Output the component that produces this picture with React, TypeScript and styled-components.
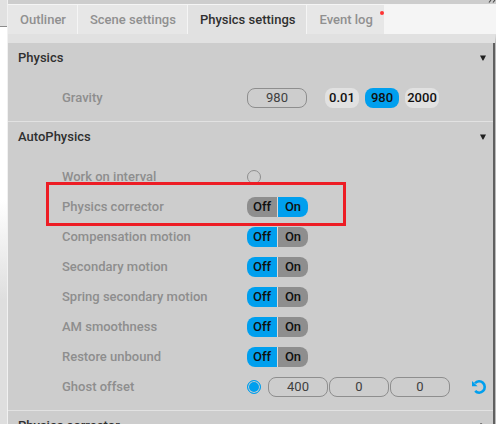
import React, { useState } from "react";
import styled, { createGlobalStyle, css } from "styled-components";

const blue = "#009fee";
const panelGrey = "#cdcdcd";
const line = "#e2e2e2";

const GlobalStyle = createGlobalStyle`
  * { box-sizing: border-box; }
  body {
    margin: 0;
    overflow: hidden;
    background: #ffffff;
    font: 500 13px/20px Roboto, "Liberation Sans", sans-serif;
    color: #303030;
  }
  button, input { font: inherit; }
`;

const Page = styled.div`
  display: flex;
  height: 100vh;
  overflow: hidden;
`;

const Viewport = styled.div`
  flex: 0 0 8px;
  border-right: 1px solid #f1f1f1;
  background: linear-gradient(#ffffff 200px, #dedede 300px);
`;

const ViewportBar = styled.div`
  height: 27px;
  background: #e1e1e1;
  border-bottom: 1px solid #8c8c8c;
`;

const Panel = styled.div`
  flex: 1;
  min-width: 0;
  display: flex;
  flex-direction: column;
`;

const TitleBar = styled.div`
  flex: 0 0 4px;
  display: flex;
  justify-content: flex-end;
  background: ${panelGrey};
`;

const TabBar = styled.div`
  flex: 0 0 30px;
  display: flex;
  gap: 1px;
  padding-top: 1px;
  background: #f5f5f5;
`;

const Tab = styled.button<{ $active?: boolean }>`
  position: relative;
  border: 0;
  padding: 0 11px 0 12px;
  white-space: nowrap;
  background: ${(p) => (p.$active ? "#e1e1e1" : "#e7e7e7")};
  color: ${(p) => (p.$active ? "#303030" : "#909090")};
`;

const Dot = styled.span`
  position: absolute;
  top: 6px;
  right: 0;
  width: 4px;
  height: 4px;
  border-radius: 50%;
  background: #ff3434;
`;

const Content = styled.main`
  flex: 1;
  min-height: 0;
  overflow: hidden;
  border-top: 9px solid #e1e1e1;
  border-right: 1px solid #bababa;
  background: ${panelGrey};
  display: flex;
`;

const Sections = styled.div`
  flex: 1;
  min-width: 0;
`;

const ScrollThumb = styled.div`
  flex: 0 0 2px;
  background: #606060;
`;

const SectionBox = styled.section`
  border-bottom: 1px solid ${line};
`;

const SectionHeader = styled.button`
  display: flex;
  align-items: center;
  justify-content: space-between;
  width: 100%;
  height: 30px;
  border: 0;
  padding: 0 7px 0 10px;
  background: none;
  color: inherit;
  text-align: left;
`;

const SectionBody = styled.div`
  padding: 10px 0 8px;
`;

const RowBox = styled.div`
  position: relative;
  display: flex;
  align-items: center;
  height: 30px;
  padding: 0 7px 0 54px;
`;

const Label = styled.label`
  flex: 0 0 185px;
  color: #8e8e8e;
`;

const Highlight = styled.div`
  position: absolute;
  z-index: 1;
  top: -10px;
  left: 38px;
  width: 300px;
  height: 44px;
  border: 3px solid #ed1c24;
  pointer-events: none;
`;

const NumberBox = styled.input`
  width: 60px;
  height: 20px;
  padding: 0;
  border: 1px solid #8e8e8e;
  border-radius: 8px;
  background: transparent;
  color: #404040;
  font-weight: 400;
  text-align: center;
  outline: none;
`;

const Vector = styled.div`
  display: flex;
  gap: 1px;
  margin-left: 7px;
`;

const Presets = styled.div`
  display: flex;
  gap: 6px;
  margin-left: 18px;
`;

const Preset = styled.button<{ $active?: boolean }>`
  width: 34px;
  height: 20px;
  padding: 0;
  border: 0;
  border-radius: 8px;
  color: #101010;
  background: ${(p) => (p.$active ? blue : "#e1e1e1")};
`;

const Switch = styled.div`
  display: flex;
  gap: 1px;
  border-radius: 8px;
  overflow: hidden;
  background: #d9d9d9;
`;

const SwitchButton = styled.button<{ $active: boolean }>`
  width: 30px;
  height: 20px;
  padding: 0;
  border: 0;
  color: #101010;
  background: ${(p) => (p.$active ? blue : "#8e8e8e")};
`;

const Tick = styled.input`
  appearance: none;
  width: 14px;
  height: 14px;
  margin: 0;
  border: 1px solid #8e8e8e;
  border-radius: 50%;
  ${(p) =>
    p.checked &&
    css`
      border-color: ${blue};
      background: ${blue};
      box-shadow: inset 0 0 0 1px ${panelGrey};
    `}
`;

const ResetButton = styled.button`
  display: flex;
  margin-left: auto;
  padding: 0;
  border: 0;
  background: none;
`;

const Caret = ({ open }: { open: boolean }) => (
  <svg width="6" height="6" viewBox="0 0 6 6" aria-hidden="true">
    <path d={open ? "M0 0.5H6L3.4 5.5H2.6Z" : "M0.5 0L5.5 2.6V3.4L0.5 6Z"} fill="#202020" />
  </svg>
);

const Section = ({ title, children }: { title: string; children?: React.ReactNode }) => (
  <SectionBox>
    <SectionHeader type="button" aria-expanded={!!children}>
      {title}
      <Caret open={!!children} />
    </SectionHeader>
    {children && <SectionBody>{children}</SectionBody>}
  </SectionBox>
);

const ToggleRow = ({ name, initial = false, marked }: { name: string; initial?: boolean; marked?: boolean }) => {
  const [on, setOn] = useState(initial);
  const id = name.toLowerCase().replace(/ /g, "-");
  return (
    <RowBox>
      <Label as="span" id={id}>{name}</Label>
      <Switch role="group" aria-labelledby={id}>
        <SwitchButton type="button" $active={!on} aria-pressed={!on} onClick={() => setOn(false)}>Off</SwitchButton>
        <SwitchButton type="button" $active={on} aria-pressed={on} onClick={() => setOn(true)}>On</SwitchButton>
      </Switch>
      {marked && <Highlight />}
    </RowBox>
  );
};

export default function App() {
  const [gravity, setGravity] = useState("980");
  const [interval, setInterval] = useState(false);
  const [ghost, setGhost] = useState(true);
  return (
    <Page>
      <GlobalStyle />
      <Viewport><ViewportBar /></Viewport>
      <Panel>
        <TitleBar>
          <svg width="8" height="3" viewBox="0 0 8 3" aria-hidden="true">
            <path d="M3 0L1 2.5M7 0L5 2.5" stroke="#505050" strokeWidth="1.2" />
          </svg>
        </TitleBar>
        <TabBar role="tablist">
          <Tab type="button" role="tab">Outliner</Tab>
          <Tab type="button" role="tab">Scene settings</Tab>
          <Tab type="button" role="tab" aria-selected $active>Physics settings</Tab>
          <Tab type="button" role="tab">Event log<Dot /></Tab>
        </TabBar>
        <Content>
          <Sections>
            <Section title="Physics">
              <RowBox>
                <Label htmlFor="gravity">Gravity</Label>
                <NumberBox id="gravity" value={gravity} onChange={(e) => setGravity(e.target.value)} />
                <Presets>
                  {["0.01", "980", "2000"].map((v) => (
                    <Preset key={v} type="button" $active={v === gravity} onClick={() => setGravity(v)}>{v}</Preset>
                  ))}
                </Presets>
              </RowBox>
            </Section>
            <Section title="AutoPhysics">
              <RowBox>
                <Label htmlFor="interval">Work on interval</Label>
                <Tick id="interval" type="checkbox" checked={interval} onChange={(e) => setInterval(e.target.checked)} />
              </RowBox>
              <ToggleRow name="Physics corrector" initial marked />
              <ToggleRow name="Compensation motion" />
              <ToggleRow name="Secondary motion" />
              <ToggleRow name="Spring secondary motion" />
              <ToggleRow name="AM smoothness" />
              <ToggleRow name="Restore unbound" />
              <RowBox>
                <Label htmlFor="ghost">Ghost offset</Label>
                <Tick id="ghost" type="checkbox" checked={ghost} onChange={(e) => setGhost(e.target.checked)} />
                <Vector>
                  <NumberBox aria-label="Ghost offset X" defaultValue="400" />
                  <NumberBox aria-label="Ghost offset Y" defaultValue="0" />
                  <NumberBox aria-label="Ghost offset Z" defaultValue="0" />
                </Vector>
                <ResetButton type="button" aria-label="Reset ghost offset">
                  <svg width="14" height="16" viewBox="0 0 14 16" fill="none" aria-hidden="true">
                    <path d="M3 4.3A5.5 5.7 0 1 1 3.2 11.9" stroke={blue} strokeWidth="2.6" />
                    <path d="M0 2L5.6 7.2H0Z" fill={blue} />
                  </svg>
                </ResetButton>
              </RowBox>
            </Section>
            <Section title="Physics corrector" />
          </Sections>
          <ScrollThumb />
        </Content>
      </Panel>
    </Page>
  );
}
